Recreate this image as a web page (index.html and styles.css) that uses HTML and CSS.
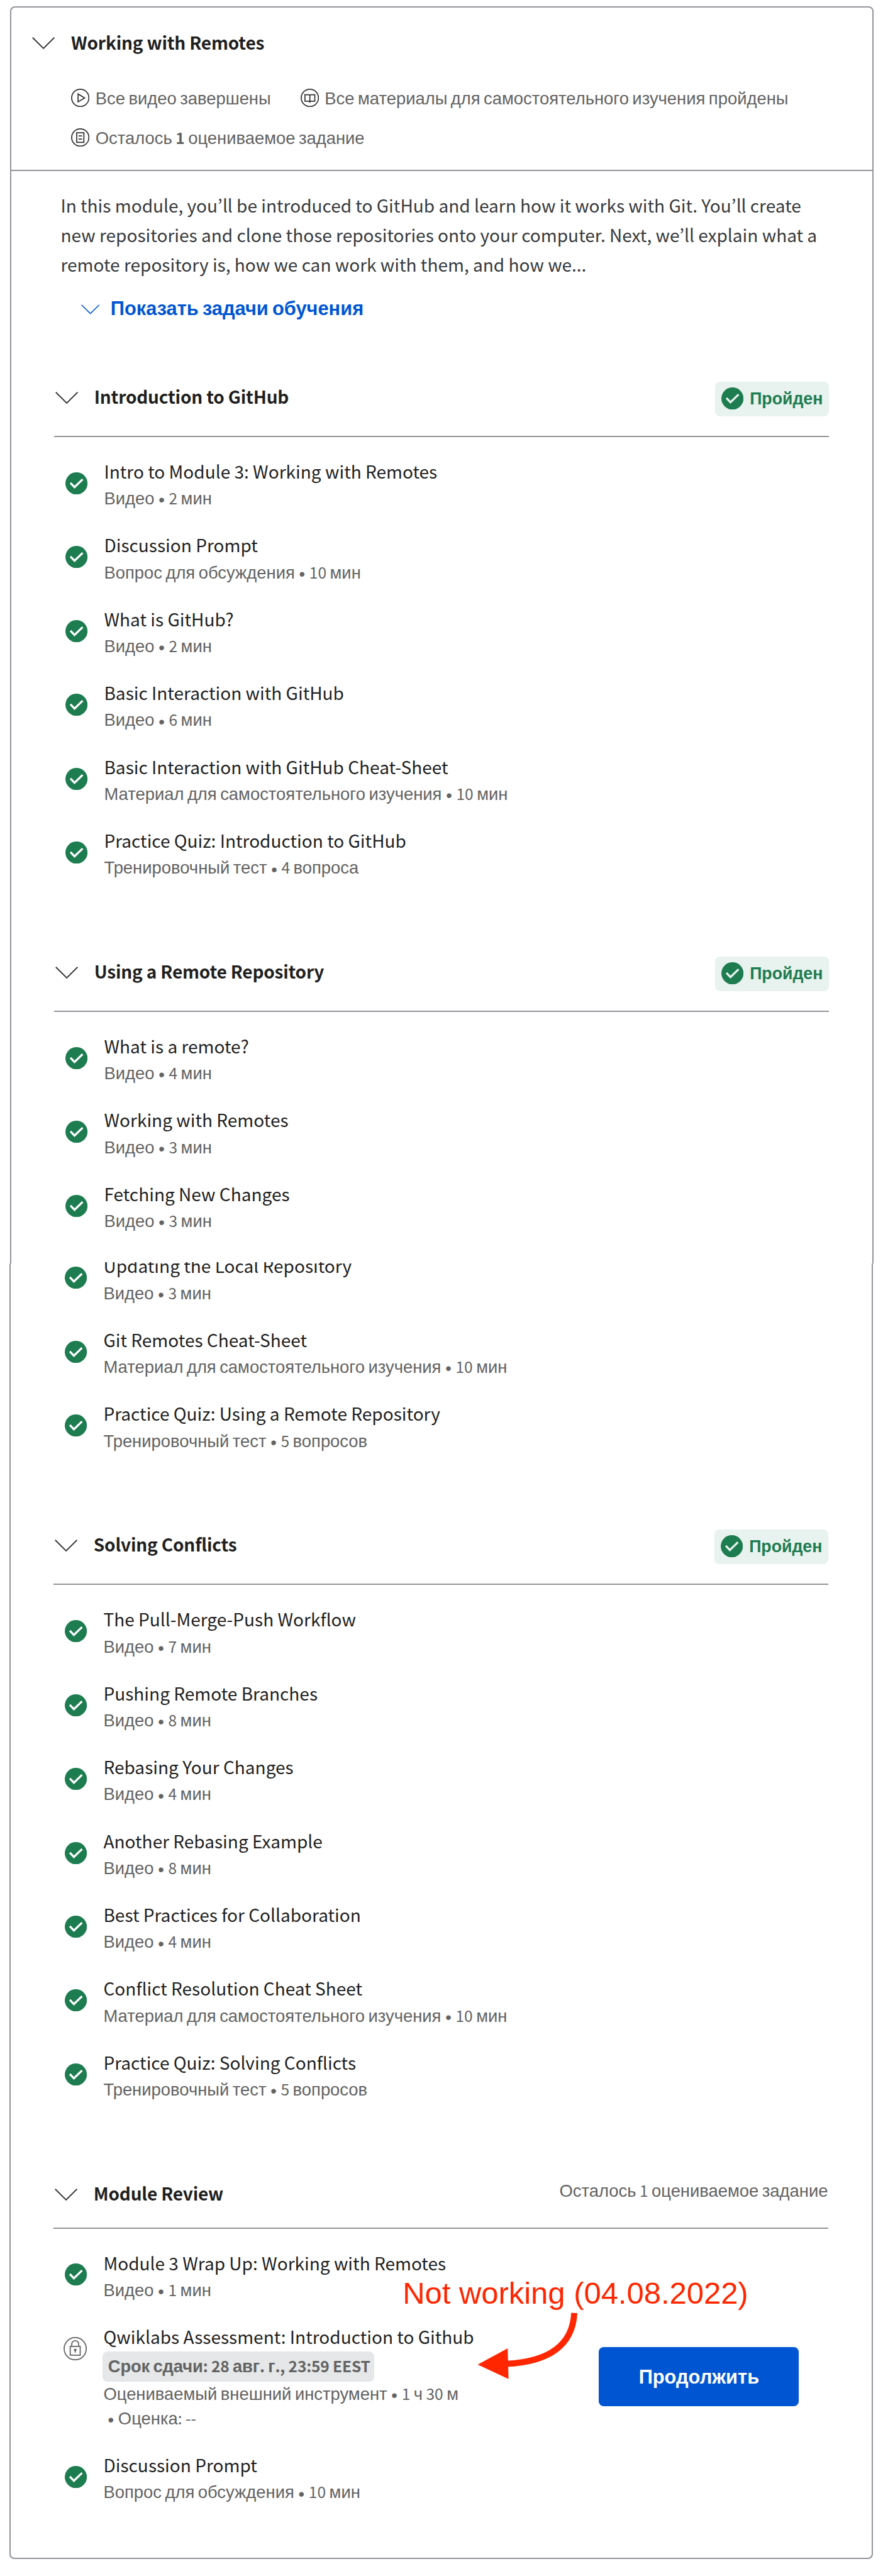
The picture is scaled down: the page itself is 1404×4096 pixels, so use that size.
FILE: index.html
```html
<!DOCTYPE html>
<html lang="ru">
<head>
<meta charset="utf-8">
<title>Working with Remotes</title>
<link rel="stylesheet" href="styles.css">
</head>
<body>
<svg class="sprite" aria-hidden="true">
  <symbol id="chevron" viewBox="0 0 37 19.5"><path d="M.8 .8 18.5 18.3 36.2 .8" fill="none" stroke="currentColor" stroke-width="2"/></symbol>
  <symbol id="check" viewBox="0 0 36 36"><circle cx="18" cy="18" r="18" fill="#1d7c50"/><path d="M8.2 17.2 14.8 24.2 28 11.4" fill="none" stroke="currentColor" stroke-width="3.4"/></symbol>
  <symbol id="play" viewBox="0 0 30 30"><g fill="none" stroke="currentColor" stroke-width="1.8"><circle cx="15" cy="15" r="14"/><path d="M11.4 8.6V21.4L22 15Z"/></g></symbol>
  <symbol id="book" viewBox="0 0 30 30"><g fill="none" stroke="currentColor" stroke-width="1.8"><circle cx="15" cy="15" r="14"/><path d="M15 10.6 13.5 9.8H7V20.4H13.5L15 21.2 16.5 20.4H23V9.8H16.5ZM15 10.6V23"/></g></symbol>
  <symbol id="page" viewBox="0 0 30 30"><g fill="none" stroke="currentColor" stroke-width="1.8"><circle cx="15" cy="15" r="14"/><path d="M9.2 7.2H20.8V22.8H9.2ZM12.2 12.4H17.8M12.2 17.4H17.8"/></g></symbol>
  <symbol id="lock" viewBox="0 0 38 38"><g fill="none" stroke="currentColor" stroke-width="1.8"><circle cx="19" cy="19" r="18"/><path d="M10.9 15.2H27.1V29.4H10.9ZM13.4 15V11.6a5.6 5.6 0 0 1 11.2 0V15"/></g><circle cx="19" cy="21" r="2.2" fill="currentColor"/><path d="M19 21V25.4" stroke="currentColor" stroke-width="1.8"/></symbol>
</svg>

<section class="card card-top">
  <header class="module-head">
    <svg class="chevron"><use href="#chevron"/></svg>
    <div class="module-info">
      <h2 class="module-title">Working with Remotes</h2>
      <div class="stats">
        <span class="stat"><svg class="stat-icon"><use href="#play"/></svg><span><span class="ru">Все видео завершены</span></span></span>
        <span class="stat"><svg class="stat-icon"><use href="#book"/></svg><span><span class="ru">Все материалы для самостоятельного изучения пройдены</span></span></span>
        <span class="stat"><svg class="stat-icon"><use href="#page"/></svg><span><span class="ru">Осталось</span> <b>1</b> <span class="ru">оцениваемое задание</span></span></span>
      </div>
    </div>
  </header>
  <p class="description">In this module, you’ll be introduced to GitHub and learn how it works with Git. You’ll create<br>new repositories and clone those repositories onto your computer. Next, we’ll explain what a<br>remote repository is, how we can work with them, and how we...</p>
  <a class="goals"><svg class="goals-chevron"><use href="#chevron"/></svg><span class="ru-bold">Показать задачи обучения</span></a>

  <div class="lesson">
    <header class="lesson-head">
      <svg class="chevron"><use href="#chevron"/></svg>
      <h3 class="lesson-title">Introduction to GitHub</h3>
      <span class="badge"><svg class="check"><use href="#check"/></svg><span>Пройден</span></span>
    </header>
    <ul class="items">
      <li class="item"><svg class="check"><use href="#check"/></svg><div><div class="name">Intro to Module 3: Working with Remotes</div><div class="meta"><span class="ru">Видео</span> <i class="dot">•</i> 2 <span class="ru">мин</span></div></div></li>
      <li class="item"><svg class="check"><use href="#check"/></svg><div><div class="name">Discussion Prompt</div><div class="meta"><span class="ru">Вопрос для обсуждения</span> <i class="dot">•</i> 10 <span class="ru">мин</span></div></div></li>
      <li class="item"><svg class="check"><use href="#check"/></svg><div><div class="name">What is GitHub?</div><div class="meta"><span class="ru">Видео</span> <i class="dot">•</i> 2 <span class="ru">мин</span></div></div></li>
      <li class="item"><svg class="check"><use href="#check"/></svg><div><div class="name">Basic Interaction with GitHub</div><div class="meta"><span class="ru">Видео</span> <i class="dot">•</i> 6 <span class="ru">мин</span></div></div></li>
      <li class="item"><svg class="check"><use href="#check"/></svg><div><div class="name">Basic Interaction with GitHub Cheat-Sheet</div><div class="meta"><span class="ru">Материал для самостоятельного изучения</span> <i class="dot">•</i> 10 <span class="ru">мин</span></div></div></li>
      <li class="item"><svg class="check"><use href="#check"/></svg><div><div class="name">Practice Quiz: Introduction to GitHub</div><div class="meta"><span class="ru">Тренировочный тест</span> <i class="dot">•</i> 4 <span class="ru">вопроса</span></div></div></li>
    </ul>
  </div>

  <div class="lesson">
    <header class="lesson-head">
      <svg class="chevron"><use href="#chevron"/></svg>
      <h3 class="lesson-title">Using a Remote Repository</h3>
      <span class="badge"><svg class="check"><use href="#check"/></svg><span>Пройден</span></span>
    </header>
    <ul class="items">
      <li class="item"><svg class="check"><use href="#check"/></svg><div><div class="name">What is a remote?</div><div class="meta"><span class="ru">Видео</span> <i class="dot">•</i> 4 <span class="ru">мин</span></div></div></li>
      <li class="item"><svg class="check"><use href="#check"/></svg><div><div class="name">Working with Remotes</div><div class="meta"><span class="ru">Видео</span> <i class="dot">•</i> 3 <span class="ru">мин</span></div></div></li>
      <li class="item"><svg class="check"><use href="#check"/></svg><div><div class="name">Fetching New Changes</div><div class="meta"><span class="ru">Видео</span> <i class="dot">•</i> 3 <span class="ru">мин</span></div></div></li>
    </ul>
  </div>
</section>

<section class="card card-bottom">
  <ul class="items items-continued">
    <li class="item"><svg class="check"><use href="#check"/></svg><div><div class="name name-cut">Updating the Local Repository</div><div class="meta"><span class="ru">Видео</span> <i class="dot">•</i> 3 <span class="ru">мин</span></div></div></li>
    <li class="item"><svg class="check"><use href="#check"/></svg><div><div class="name">Git Remotes Cheat-Sheet</div><div class="meta"><span class="ru">Материал для самостоятельного изучения</span> <i class="dot">•</i> 10 <span class="ru">мин</span></div></div></li>
    <li class="item"><svg class="check"><use href="#check"/></svg><div><div class="name">Practice Quiz: Using a Remote Repository</div><div class="meta"><span class="ru">Тренировочный тест</span> <i class="dot">•</i> 5 <span class="ru">вопросов</span></div></div></li>
  </ul>

  <div class="lesson">
    <header class="lesson-head">
      <svg class="chevron"><use href="#chevron"/></svg>
      <h3 class="lesson-title">Solving Conflicts</h3>
      <span class="badge"><svg class="check"><use href="#check"/></svg><span>Пройден</span></span>
    </header>
    <ul class="items">
      <li class="item"><svg class="check"><use href="#check"/></svg><div><div class="name">The Pull-Merge-Push Workflow</div><div class="meta"><span class="ru">Видео</span> <i class="dot">•</i> 7 <span class="ru">мин</span></div></div></li>
      <li class="item"><svg class="check"><use href="#check"/></svg><div><div class="name">Pushing Remote Branches</div><div class="meta"><span class="ru">Видео</span> <i class="dot">•</i> 8 <span class="ru">мин</span></div></div></li>
      <li class="item"><svg class="check"><use href="#check"/></svg><div><div class="name">Rebasing Your Changes</div><div class="meta"><span class="ru">Видео</span> <i class="dot">•</i> 4 <span class="ru">мин</span></div></div></li>
      <li class="item"><svg class="check"><use href="#check"/></svg><div><div class="name">Another Rebasing Example</div><div class="meta"><span class="ru">Видео</span> <i class="dot">•</i> 8 <span class="ru">мин</span></div></div></li>
      <li class="item"><svg class="check"><use href="#check"/></svg><div><div class="name">Best Practices for Collaboration</div><div class="meta"><span class="ru">Видео</span> <i class="dot">•</i> 4 <span class="ru">мин</span></div></div></li>
      <li class="item"><svg class="check"><use href="#check"/></svg><div><div class="name">Conflict Resolution Cheat Sheet</div><div class="meta"><span class="ru">Материал для самостоятельного изучения</span> <i class="dot">•</i> 10 <span class="ru">мин</span></div></div></li>
      <li class="item"><svg class="check"><use href="#check"/></svg><div><div class="name">Practice Quiz: Solving Conflicts</div><div class="meta"><span class="ru">Тренировочный тест</span> <i class="dot">•</i> 5 <span class="ru">вопросов</span></div></div></li>
    </ul>
  </div>

  <div class="lesson">
    <header class="lesson-head lesson-head-open">
      <svg class="chevron"><use href="#chevron"/></svg>
      <h3 class="lesson-title">Module Review</h3>
      <span class="remaining"><span class="ru">Осталось</span> 1 <span class="ru">оцениваемое задание</span></span>
    </header>
    <ul class="items">
      <li class="item"><svg class="check"><use href="#check"/></svg><div><div class="name">Module 3 Wrap Up: Working with Remotes</div><div class="meta"><span class="ru">Видео</span> <i class="dot">•</i> 1 <span class="ru">мин</span></div></div></li>
      <li class="item item-graded">
        <svg class="lock"><use href="#lock"/></svg>
        <div class="graded-info">
          <div class="name">Qwiklabs Assessment: Introduction to Github</div>
          <div class="deadline"><span class="ru">Срок сдачи</span>: 28 <span class="ru">авг</span>. <span class="ru">г</span>., 23:59 EEST</div>
          <div class="meta"><span class="ru">Оцениваемый внешний инструмент</span> <i class="dot">•</i> 1 <span class="ru">ч</span> 30 <span class="ru">м</span></div>
          <div class="meta meta-score"><i class="dot">•</i> <span class="ru">Оценка</span>: --</div>
        </div>
        <button class="continue">Продолжить</button>
      </li>
      <li class="item"><svg class="check"><use href="#check"/></svg><div><div class="name">Discussion Prompt</div><div class="meta"><span class="ru">Вопрос для обсуждения</span> <i class="dot">•</i> 10 <span class="ru">мин</span></div></div></li>
    </ul>
  </div>

  <div class="note">Not working (04.08.2022)</div>
  <svg class="note-arrow" viewBox="773 3755 170 113"><path d="M932.5 3757.8C930 3809 893 3837 822 3840.5" fill="none" stroke="#ff2600" stroke-width="10"/><path d="M775.7 3841.7 824.3 3815.4 825.7 3865.2Z" fill="#ff2600"/></svg>
</section>
</body>
</html>
```

FILE: styles.css
```css
* { box-sizing: border-box; margin: 0; padding: 0; }

html { font-size: 9.788px; background: #fff; }

body {
  padding: 1rem 0 0;
  height: 4096px;
  overflow: hidden;
  font-family: "Noto Sans CJK KR", "Liberation Sans", sans-serif;
  font-size: 2.865rem;
  color: #1f1f1f;
}

svg { display: block; flex: none; }
.sprite { position: absolute; width: 0; height: 0; }

.ru {
  font-family: "Liberation Sans", Arial, sans-serif;
  font-size: 1.117em;
  line-height: 0;
  word-spacing: -0.078em;
}

.card { display: flow-root; width: 140.3rem; border: 2px solid #93939a; }
.card-top {
  height: 204.3rem;
  margin-left: 1.6rem;
  border-bottom: 0;
  border-radius: 0.8rem 0.8rem 0 0;
}
.card-bottom {
  position: relative;
  height: 210.4rem;
  margin-left: 1.5rem;
  border-top: 0;
  border-radius: 0 0 0.8rem 0.8rem;
}

.module-head {
  display: flex;
  height: 26.6rem;
  padding: 3.55rem 0 0 3.4rem;
  border-bottom: 2px solid #93939a;
}
.chevron { width: 3.7rem; height: 1.95rem; margin-top: 1.25rem; color: #373737; }
.module-info { margin-left: 2.65rem; }
.module-title { font-size: 2.865rem; line-height: 4rem; font-weight: 700; letter-spacing: -0.02rem; }
.stats {
  display: flex;
  flex-wrap: wrap;
  column-gap: 4.8rem;
  row-gap: 2.4rem;
  margin-top: 5.16rem;
  color: #636363;
  font-size: 2.507rem;
  line-height: 4rem;
}
.stat { display: flex; align-items: center; gap: 0.95rem; height: 4rem; white-space: nowrap; }
.stat-icon { width: 3rem; height: 3rem; color: #333; }

.description {
  margin: 3.2rem 0 0 8.05rem;
  color: #373a3c;
  line-height: 4.8rem;
  white-space: nowrap;
}
.goals { display: flex; align-items: center; gap: 1.75rem; margin: 2.45rem 0 0 11.4rem; color: #0056d2; height: 4.8rem; }
.goals-chevron { width: 3rem; height: 1.6rem; }
.ru-bold { font: 700 3.15rem/4.8rem "Liberation Sans", Arial, sans-serif; word-spacing: -0.078em; }

.lesson { padding: 0 7rem; }
.lesson-head {
  display: flex;
  align-items: flex-start;
  height: 9rem;
  padding-left: 0.15rem;
  border-bottom: 2px solid #93939a;
}
.goals + .lesson { margin-top: 9.35rem; }
.lesson + .lesson, .items-continued + .lesson { margin-top: 9.25rem; }
.lesson-head-open { height: 8.15rem; }
.lesson-head .chevron { margin-top: 1.6rem; }
.lesson-title {
  margin: 0.3rem auto 0 2.65rem;
  font-size: 2.865rem;
  line-height: 4rem;
  font-weight: 700;
  letter-spacing: -0.02rem;
}

.badge {
  display: flex;
  align-items: flex-start;
  width: 18.5rem;
  height: 5.6rem;
  padding: 0.9rem 0 0 1rem;
  gap: 1rem;
  border-radius: 0.8rem;
  background: #e8f2ee;
  color: #1d7c50;
  font: 700 2.73rem/3.8rem "Liberation Sans", Arial, sans-serif;
}
.badge .check { color: #e8f2ee; }
.remaining { margin: -0.1rem 0.1rem 0 0; font-size: 2.507rem; line-height: 4rem; color: #636363; }

.items { list-style: none; padding-top: 3.15rem; }
.items-continued { margin-top: -2.05rem; padding: 0 7rem; }
.item { display: flex; height: 12rem; padding-left: 1.85rem; white-space: nowrap; }
.check { width: 3.6rem; height: 3.6rem; color: #fff; }
.item > .check { margin: 2.55rem 2.65rem 0 0; }
.name { line-height: 4.8rem; }
.name-cut { clip-path: inset(1.8rem 0 0 0); }
.meta { height: 4rem; margin-top: -0.07rem; font-size: 2.507rem; line-height: 4rem; color: #636363; }
.dot {
  display: inline-block;
  width: 1.23rem;
  font: normal 2.8rem/0 "Liberation Sans", Arial, sans-serif;
  text-align: center;
  vertical-align: -0.08em;
}

.item-graded { height: 20.85rem; padding-left: 1.65rem; }
.lock { width: 3.8rem; height: 3.8rem; margin: 2.45rem 2.65rem 0 0; color: #636363; }
.graded-info { flex: 1; }
.deadline {
  width: 44.1rem;
  height: 4.9rem;
  margin-left: -0.1rem;
  padding-left: 0.85rem;
  border-radius: 0.8rem;
  background: #e5e7e8;
  color: #636363;
  font-size: 2.507rem;
  font-weight: 700;
  line-height: 4.8rem;
  letter-spacing: -0.015rem;
}
.meta-score { padding-left: 0.6rem; }
.continue {
  width: 32.5rem;
  height: 9.65rem;
  margin: 4.05rem 4.8rem 0 0;
  padding-top: 0.3rem;
  border: 0;
  border-radius: 0.8rem;
  background: #0056d2;
  color: #fff;
  font: 700 3.15rem/4.8rem "Liberation Sans", Arial, sans-serif;
}

.note {
  position: absolute;
  left: 63.7rem;
  top: 164.45rem;
  color: #ff2600;
  font: 5rem/5.6rem "Liberation Sans", Arial, sans-serif;
  white-space: nowrap;
}
.note-arrow { position: absolute; left: 75.6rem; top: 170.2rem; width: 17rem; height: 11.3rem; }
```
